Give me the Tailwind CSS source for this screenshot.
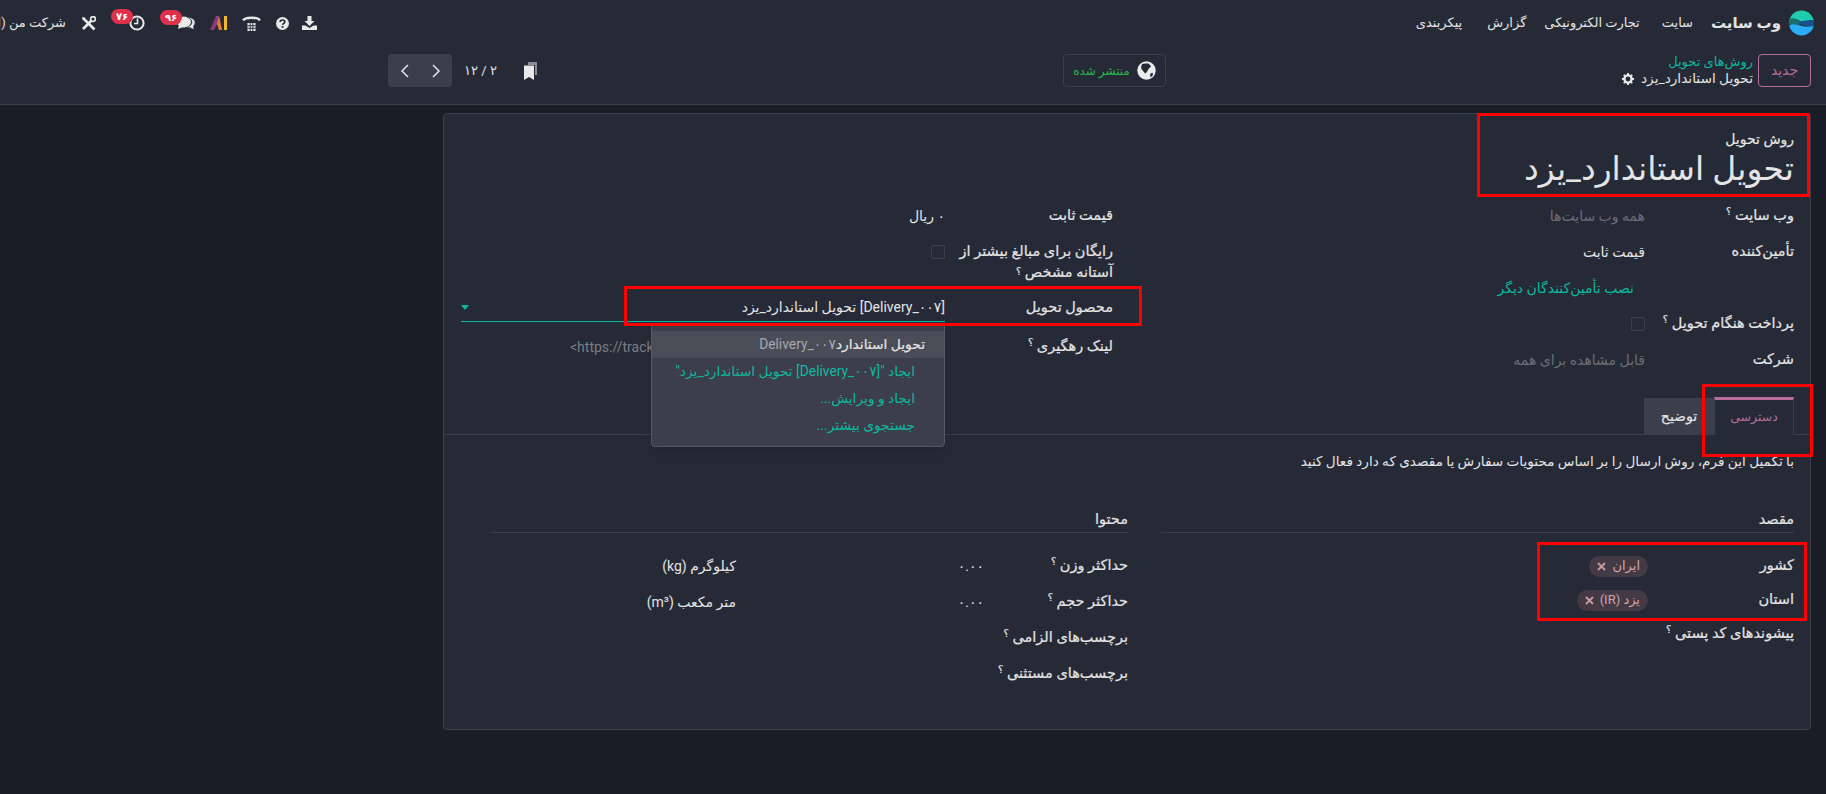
<!doctype html>
<html dir="rtl" lang="fa">
<head>
<meta charset="utf-8">
<script src="https://cdn.jsdelivr.net/npm/@tailwindcss/browser@4"></script>
</head>
<body class="w-[1826px] h-[794px] overflow-hidden bg-[#1b1d26] text-[#e4e4e4] text-[13px] whitespace-nowrap font-['Roboto','DejaVu_Sans',sans-serif]">
<div class="relative w-full h-full overflow-hidden">

<header class="bg-[#262a36] border-b border-[#3c3e4b] h-[105px]">
  <nav class="h-[46px] flex items-center justify-between">
    <div class="flex items-center pr-[12px]">
      <svg class="w-[25px] h-[26px]" viewBox="0 0 25 26">
        <defs><clipPath id="lg"><circle cx="12.5" cy="13" r="12.5"/></clipPath></defs>
        <g clip-path="url(#lg)">
          <rect width="25" height="12" fill="#1fcbaf"/>
          <path d="M0 9C6 7 10 10 15 13C10 16 4 15 0 14Z" fill="#176f6b"/>
          <path d="M9 13C14 10 20 10 25 10V17C20 18 14 15 9 13Z" fill="#16508f"/>
          <path d="M0 15C8 12 14 19 25 16V26H0Z" fill="#29aef5"/>
        </g>
      </svg>
      <span class="mr-[8px] w-[64px] font-bold text-[15px]">وب سایت</span>
      <span class="mr-[24px]">سایت</span>
      <span class="mr-[22px]">تجارت الکترونیکی</span>
      <span class="mr-[18px]">گزارش</span>
      <span class="mr-[25px]">پیکربندی</span>
    </div>
    <div class="flex items-center h-full" dir="ltr">
      <span class="w-[66px] overflow-hidden" dir="rtl">شرکت من (ایران)</span>
      <svg class="w-[15px] h-[15px] ml-[15px]" viewBox="0 0 15 15" fill="none" stroke="#e9e9e9"><path d="M2 2L13.5 13.5" stroke-width="2.6"/><path d="M13 2L2 13" stroke-width="2.6"/><path d="M1 1L3.5 1.5L4 4L2 4Z" fill="#e9e9e9" stroke="none"/><circle cx="12" cy="3" r="2.4" fill="#262a36" stroke-width="1.6"/></svg>
      <span class="relative ml-[33px] w-[16px] h-[16px]">
        <svg class="w-[16px] h-[16px]" viewBox="0 0 16 16" fill="none" stroke="#e9e9e9" stroke-width="2"><circle cx="8" cy="8" r="6.6"/><path d="M8.5 3.5V8.5H5" stroke-width="1.6"/></svg>
        <span class="absolute top-[-6px] left-[-18px] w-[22px] h-[15px] rounded-full bg-[#e0314b] text-white text-[10px] font-bold leading-[15px] text-center">۷۶</span>
      </span>
      <span class="relative ml-[32px] w-[18px] h-[14px]">
        <svg class="w-[18px] h-[14px]" viewBox="0 0 18 14" fill="#e9e9e9"><ellipse cx="7" cy="6" rx="7" ry="5.5"/><path d="M2 9L1 13L6 11Z"/><path d="M10 1.5C14.5 1 18 3.500 18 6.500C18 8.500 17 9.500 16.500 10L17 13.500L12.500 11.500C10.500 11.500 9 11.500 8 11.500C12 11 15 9 15 6C15 4 13 2 10 1.500Z" stroke="#262a36" stroke-width=".5"/></svg>
        <span class="absolute top-[-6px] left-[-17px] w-[22px] h-[15px] rounded-full bg-[#e0314b] text-white text-[10px] font-bold leading-[15px] text-center">۹۶</span>
      </span>
      <svg class="w-[18px] h-[14px] ml-[15px]" viewBox="0 0 18 14"><path d="M0 14L6 0H9L12 14H9L7.500 7L4 14Z" fill="#8a3a7e"/><path d="M7 8L9 0L12 14H9Z" fill="#e0783a"/><rect x="14" y="0" width="3" height="14" fill="#f4b52f"/></svg>
      <svg class="w-[19px] h-[16px] ml-[14px]" viewBox="0 0 19 16"><path d="M1.300 5.500C2.500 1.800 16.500 1.800 17.700 5.500" fill="none" stroke="#e9e9e9" stroke-width="2.600"/><path d="M5.500 8H13.500V16H5.500Z" fill="#e9e9e9"/><path d="M5.500 10.700H13.500M5.500 13.300H13.500M8.200 8V16M10.800 8V16" stroke="#262a36" stroke-width=".9"/></svg>
      <svg class="w-[13px] h-[13px] ml-[15px]" viewBox="0 0 13 13"><circle cx="6.500" cy="6.500" r="6.500" fill="#e9e9e9"/><path d="M4.200 5C4.200 3.500 5.300 3 6.500 3S8.800 3.700 8.800 5C8.800 6.300 7 6.300 6.500 7.800" fill="none" stroke="#262a36" stroke-width="1.700"/><rect x="5.600" y="9" width="1.800" height="1.800" fill="#262a36"/></svg>
      <svg class="w-[15px] h-[14px] ml-[13px]" viewBox="0 0 15 14" fill="#e9e9e9"><path d="M5.500 0H9.500V5H12.500L7.500 10L2.500 5H5.500Z"/><path d="M0 9.500H3.500L7.500 12L11.500 9.500H15V14H0Z"/></svg>
    </div>
  </nav>
  <div class="h-[58px] flex items-start pt-[8px] pl-[388px] pr-[15px]" dir="ltr">
    <div class="flex items-center w-[64px] h-[33px] bg-[#3c3e4b] rounded-[4px]">
      <svg class="w-[32px] h-[16px]" viewBox="0 0 32 16" fill="none" stroke="#e4e4e4" stroke-width="1.500"><path d="M20 2L14 8L20 14"/></svg>
      <svg class="w-[32px] h-[16px]" viewBox="0 0 32 16" fill="none" stroke="#e4e4e4" stroke-width="1.500"><path d="M13 2L19 8L13 14"/></svg>
    </div>
    <span class="ml-[10px] w-[37px] h-[33px] leading-[33px] text-center">۱۲ / ۲</span>
    <svg class="w-[13px] h-[18px] ml-[25px] mt-[8px]" viewBox="0 0 13 18"><path d="M4 0H13V13H11V3H4Z" fill="#8b8d96"/><path d="M0 3.500H10V18L5 15L0 18Z" fill="#e9e9e9"/></svg>
    <div class="ml-[526px] flex items-center justify-center gap-[7px] w-[103px] h-[33px] border border-[#3c3e4b] rounded-[4px]" dir="rtl">
      <svg class="w-[19px] h-[19px]" viewBox="0 0 19 19"><circle cx="9.500" cy="9.500" r="9.200" fill="#ececec"/><path d="M5 3C7 2 10 2.500 11.500 2.500L14 5C13.500 7 11 7.500 10.500 10C9.500 11 9 12.500 8 12.500C7 10.500 4.500 9 4 6.500Z" fill="#262a36"/><path d="M13 13L15.500 11.500L16 14L13.500 16.500Z" fill="#262a36"/></svg>
      <span class="text-[#28b84a] text-[12px]">منتشر شده</span>
    </div>
    <div class="ml-auto flex flex-col items-start" dir="rtl">
      <span class="text-[#0cb89f] leading-[16px]">روش‌های تحویل</span>
      <span class="flex items-center gap-[7px] leading-[17px] text-[13.7px]">تحویل استاندارد_یزد
        <svg class="w-[12px] h-[12px]" viewBox="0 0 12 12"><circle cx="6" cy="6" r="3.600" fill="none" stroke="#e9e9e9" stroke-width="2.400"/><path d="M6 0V12M0 6H12M1.800 1.800L10.200 10.200M10.200 1.800L1.800 10.200" stroke="#e9e9e9" stroke-width="1.800" stroke-dasharray="2 8 2"/></svg>
      </span>
    </div>
    <button class="ml-[5px] w-[53px] h-[33px] border border-[#b76e9f] rounded-[4px] text-[#b76e9f] text-[14px]">جدید</button>
  </div>
</header>

<main class="mt-[8px] mr-[15px] w-[1368px] h-[617px] bg-[#262a36] border border-[#3c3e4b] rounded-[4px] text-[14px]">
  <div class="h-[84px] pt-[14px] pr-[16px]">
    <div class="h-[21px] leading-[22px] text-[14px] [-webkit-text-stroke:0.2px]">روش تحویل</div>
    <h1 class="h-[40px] leading-[40px] text-[33px]">تحویل استاندارد_یزد</h1>
  </div>

  <div class="flex h-[180px] pr-[16px]">
    <div class="w-[650px]">
      <div class="flex items-center h-[36px]"><span class="w-[149px] text-[14.5px] [-webkit-text-stroke:0.2px]">وب سایت <sup class="text-[10px]">؟</sup></span><span class="text-[#6b6d78]">همه وب سایت‌ها</span></div>
      <div class="flex items-center h-[36px]"><span class="w-[149px] text-[14.5px] [-webkit-text-stroke:0.2px]">تأمین‌کننده</span><span>قیمت ثابت</span></div>
      <div class="flex items-center h-[36px]"><span class="w-[160px]"></span><span class="text-[#0cb89f]">نصب تأمین‌کنندگان دیگر</span></div>
      <div class="flex items-center h-[36px]"><span class="w-[149px] text-[14.5px] [-webkit-text-stroke:0.2px]">پرداخت هنگام تحویل <sup class="text-[10px]">؟</sup></span><span class="block w-[14px] h-[14px] border border-[#3c3e4b] rounded-[1px]"></span></div>
      <div class="flex items-center h-[36px]"><span class="w-[149px] text-[14.5px] [-webkit-text-stroke:0.2px]">شرکت</span><span class="text-[#6b6d78]">قابل مشاهده برای همه</span></div>
    </div>
    <div class="mr-[31px] w-[652px]">
      <div class="flex items-center h-[36px]"><span class="w-[168px] text-[14.5px] [-webkit-text-stroke:0.2px]">قیمت ثابت</span><span>۰ ریال</span></div>
      <div class="flex items-start h-[56px] pt-[8px]"><span class="w-[168px] text-[14.5px] [-webkit-text-stroke:0.2px] whitespace-normal leading-[20px]">رایگان برای مبالغ بیشتر از آستانه مشخص <span class="text-[10px] align-[2px]">؟</span></span><span class="block w-[14px] h-[14px] mt-[3px] border border-[#3c3e4b] rounded-[1px]"></span></div>
      <div class="flex items-center h-[36px]"><span class="w-[168px] text-[14.5px] [-webkit-text-stroke:0.2px]">محصول تحویل</span>
        <div class="relative w-[484px] h-[28px] border-b border-[#0cb89f] flex items-center justify-between">
          <span>[Delivery_۰۰۷] تحویل استاندارد_یزد</span>
          <svg class="w-[8px] h-[5px]" viewBox="0 0 8 5"><path d="M0 0H8L4 5Z" fill="#0cb89f"/></svg>
          <ul class="absolute top-[29px] right-0 z-10 w-[294px] h-[124px] pt-[7px] bg-[#3c3e4b] border border-[#55576a] rounded-[4px] shadow-lg text-[13.8px]">
            <li class="h-[27px] leading-[27px] pr-[19px] bg-[#4a4c58]"><b class="font-normal [-webkit-text-stroke:0.2px]">تحویل استاندارد</b><span class="text-[#a6a7b0]">Delivery_۰۰۷</span></li>
            <li class="h-[27px] leading-[27px] pr-[29px] text-[#0cb89f]">ایجاد "[Delivery_۰۰۷] تحویل استاندارد_یزد"</li>
            <li class="h-[27px] leading-[27px] pr-[29px] text-[#0cb89f]">ایجاد و ویرایش...</li>
            <li class="h-[27px] leading-[27px] pr-[29px] text-[#0cb89f]">جستجوی بیشتر...</li>
          </ul>
        </div>
      </div>
      <div class="flex items-center h-[42px]"><span class="w-[168px] text-[14.5px] [-webkit-text-stroke:0.2px]">لینک رهگیری <sup class="text-[10px]">؟</sup></span><span class="w-[484px] pl-[109px] text-left text-[#7b7d88]" dir="ltr">&lt;https://tracking-link</span></div>
    </div>
  </div>

  <div class="flex mt-[19px] h-[38px] border-b border-[#3c3e4b] pr-[16px]">
    <div class="w-[80px] h-[38px] -mb-px flex items-center justify-center border-t-[3px] border-t-[#b76e9f] border-r border-l border-[#3c3e4b] bg-[#262a36] text-[#b76e9f] text-[12.5px]">دسترسی</div>
    <div class="w-[70px] h-[37px] mt-px flex items-center justify-center bg-[#3c3e4b] [-webkit-text-stroke:0.2px]">توضیح</div>
  </div>

  <div class="pr-[16px]">
    <p class="mt-[15px] h-[22px] leading-[22px] text-[13.6px]">با تکمیل این فرم، روش ارسال را بر اساس محتویات سفارش یا مقصدی که دارد فعال کنید</p>
    <div class="flex">
      <section class="w-[633px]">
        <h2 class="mt-[35px] h-[26px] leading-[26px] border-b border-[#3c3e4b] text-[14.5px] [-webkit-text-stroke:0.2px]">مقصد</h2>
        <div class="mt-[16px] flex items-center h-[34px]"><span class="w-[146px] text-[14.5px] [-webkit-text-stroke:0.2px]">کشور</span><span class="flex items-center gap-[6px] h-[21px] px-[8px] rounded-full bg-[#443a45] text-[#d3a5a8] text-[13px]">ایران <svg class="w-[9px] h-[9px]" viewBox="0 0 9 9"><path d="M1 1L8 8M8 1L1 8" stroke="#c79ca0" stroke-width="1.800"/></svg></span></div>
        <div class="flex items-center h-[34px]"><span class="w-[146px] text-[14.5px] [-webkit-text-stroke:0.2px]">استان</span><span class="flex items-center gap-[6px] h-[21px] px-[8px] rounded-full bg-[#443a45] text-[#d3a5a8] text-[13px]">یزد (IR) <svg class="w-[9px] h-[9px]" viewBox="0 0 9 9"><path d="M1 1L8 8M8 1L1 8" stroke="#c79ca0" stroke-width="1.800"/></svg></span></div>
        <div class="flex items-center h-[34px]"><span class="text-[14.5px] [-webkit-text-stroke:0.2px]">پیشوندهای کد پستی <sup class="text-[10px]">؟</sup></span></div>
      </section>
      <section class="mr-[33px] w-[637px]">
        <h2 class="mt-[35px] h-[26px] leading-[26px] border-b border-[#3c3e4b] text-[14.5px] [-webkit-text-stroke:0.2px]">محتوا</h2>
        <div class="mt-[15px] flex items-center h-[36px]"><span class="w-[144px] text-[14.5px] [-webkit-text-stroke:0.2px]">حداکثر وزن <sup class="text-[10px]">؟</sup></span><span class="w-[248px]">۰.۰۰</span><span>کیلوگرم (kg)</span></div>
        <div class="flex items-center h-[36px]"><span class="w-[144px] text-[14.5px] [-webkit-text-stroke:0.2px]">حداکثر حجم <sup class="text-[10px]">؟</sup></span><span class="w-[248px]">۰.۰۰</span><span>متر مکعب (m³)</span></div>
        <div class="flex items-center h-[36px]"><span class="text-[14.5px] [-webkit-text-stroke:0.2px]">برچسب‌های الزامی <sup class="text-[10px]">؟</sup></span></div>
        <div class="flex items-center h-[36px]"><span class="text-[14.5px] [-webkit-text-stroke:0.2px]">برچسب‌های مستثنی <sup class="text-[10px]">؟</sup></span></div>
      </section>
    </div>
  </div>
</main>

<div class="absolute left-[1477px] top-[113px] w-[333px] h-[84px] border-[3px] border-[#f00]"></div>
<div class="absolute left-[624px] top-[286px] w-[518px] h-[40px] border-[3px] border-[#f00] z-20"></div>
<div class="absolute left-[1702px] top-[384px] w-[111px] h-[73px] border-[3px] border-[#f00]"></div>
<div class="absolute left-[1537px] top-[542px] w-[270px] h-[79px] border-[3px] border-[#f00]"></div>

</div>
</body>
</html>
